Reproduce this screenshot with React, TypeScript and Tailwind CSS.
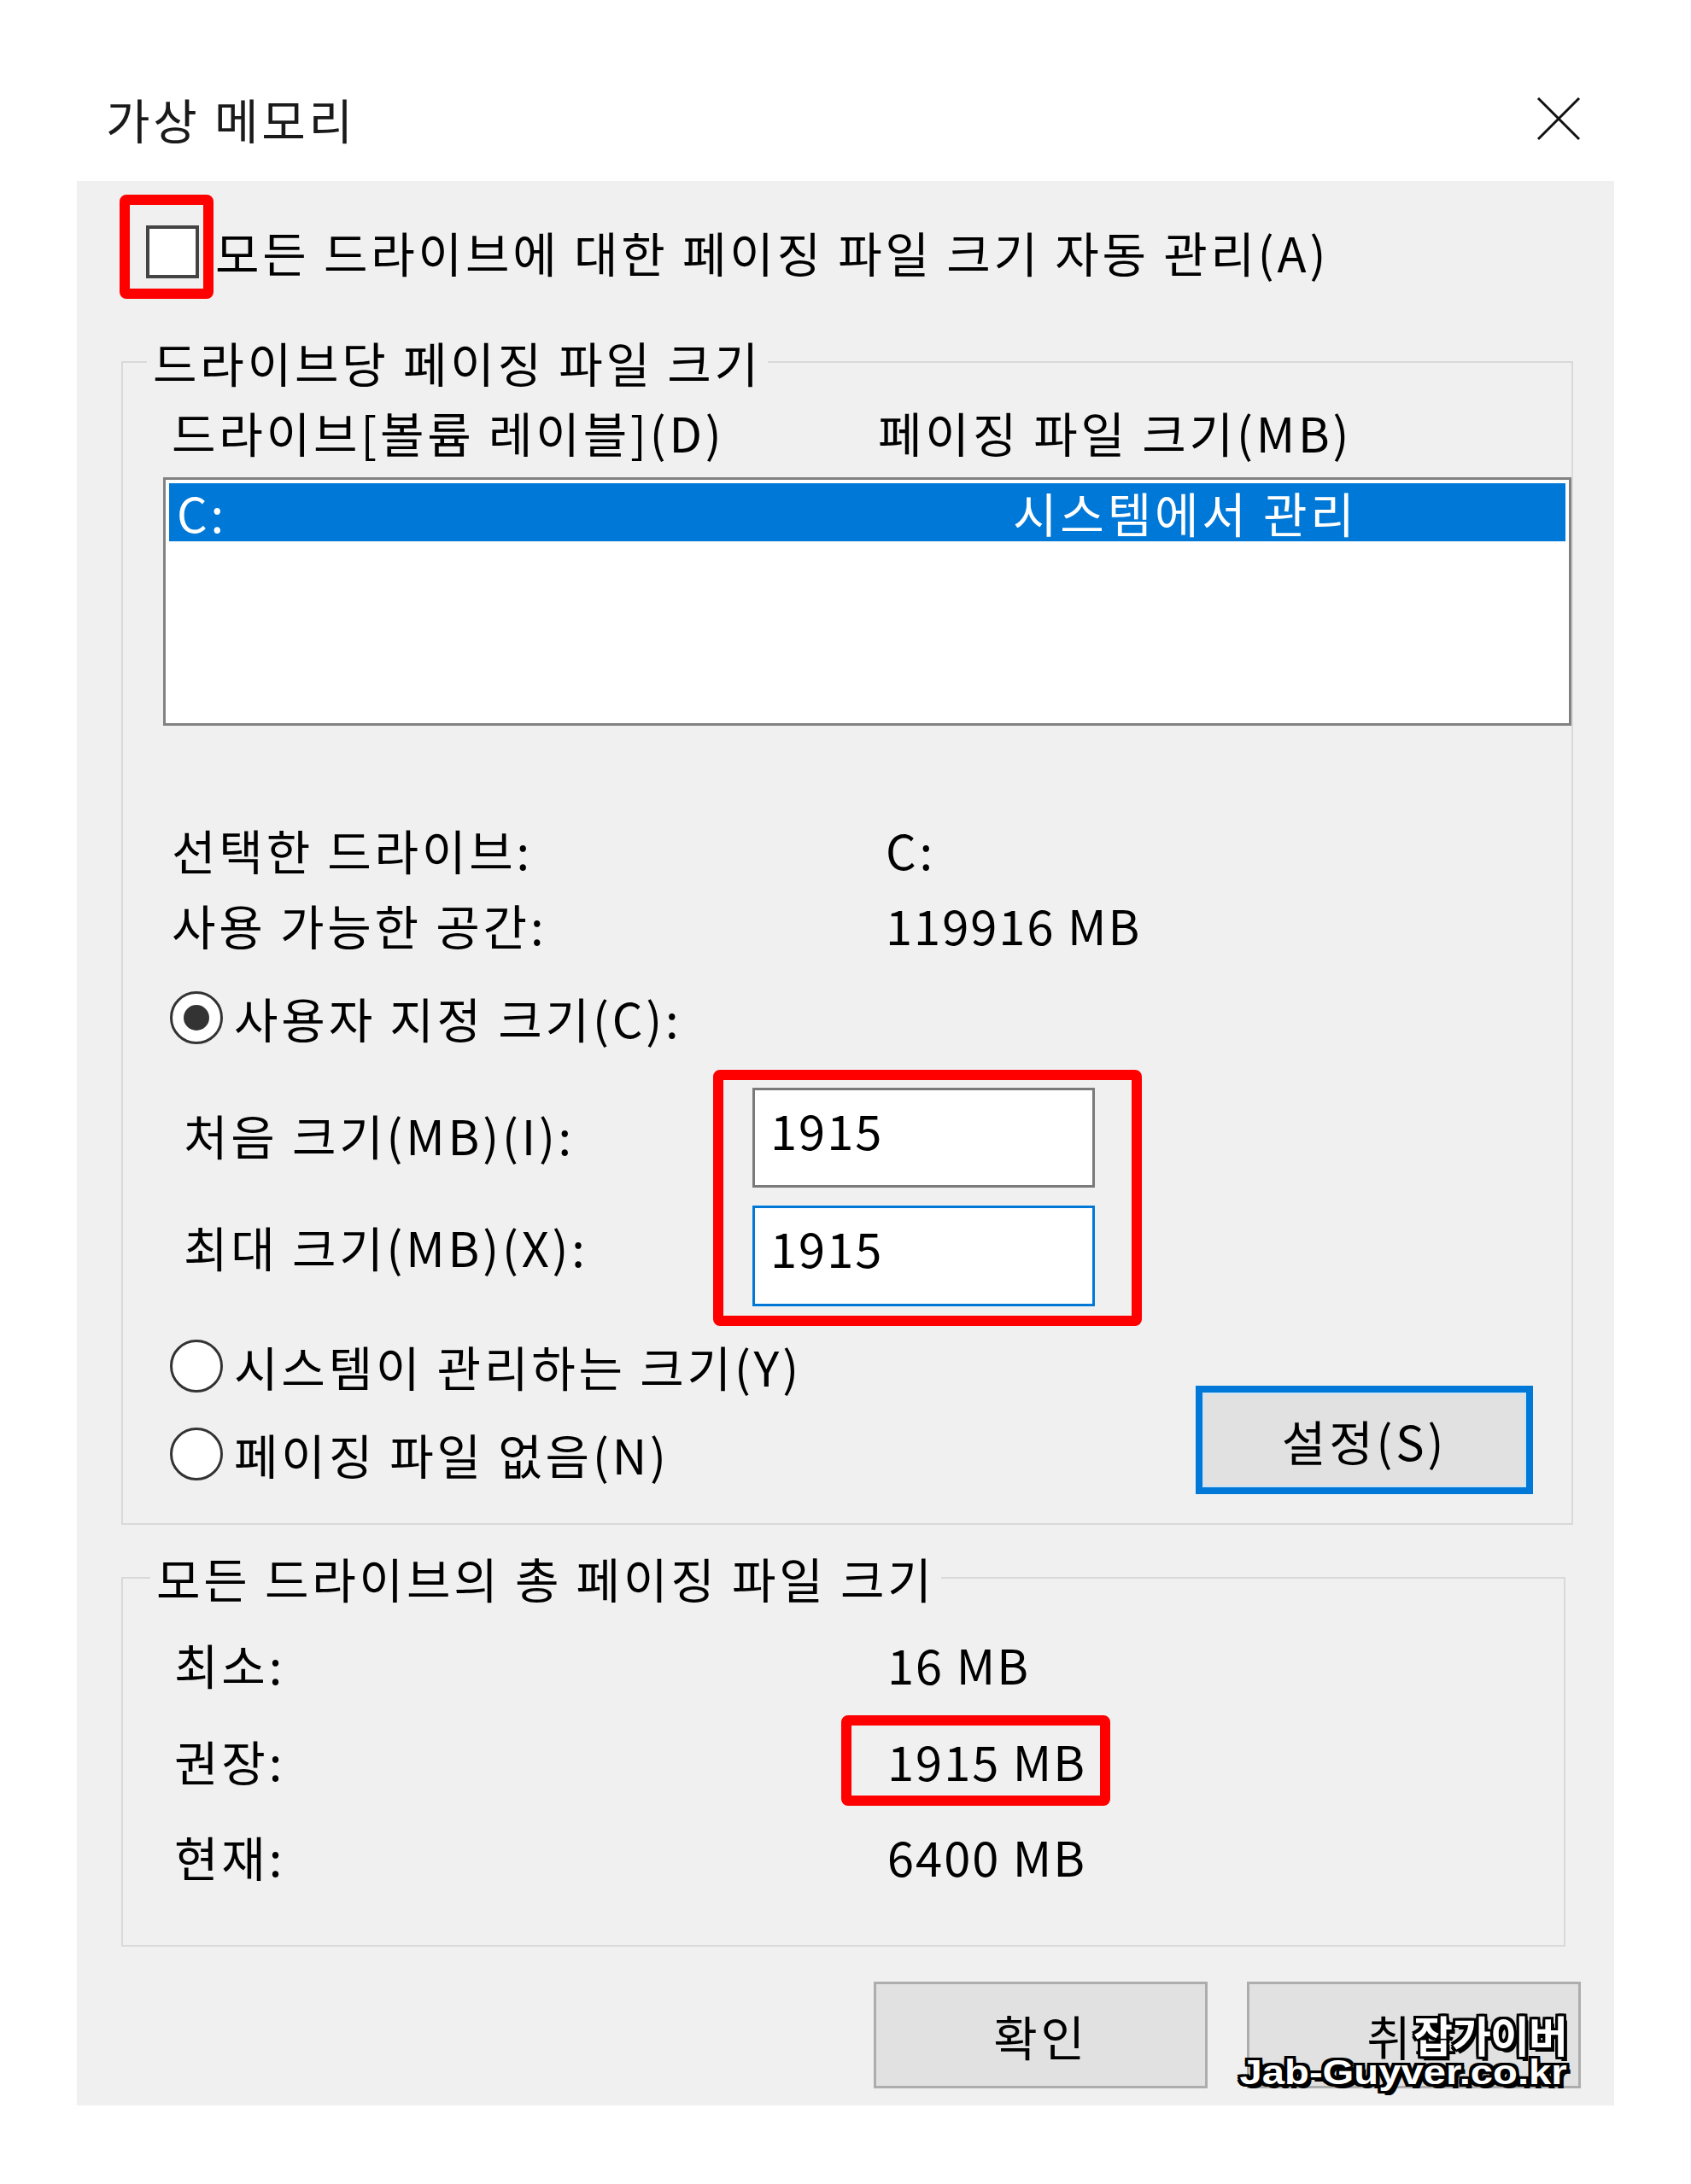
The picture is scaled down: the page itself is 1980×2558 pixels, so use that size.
import React from "react";

const Radio = ({ checked }: { checked?: boolean }) => (
  <span className="flex h-[62px] w-[62px] shrink-0 items-center justify-center rounded-full border-[3px] border-[#333] bg-white">
    {checked && <span className="h-[30px] w-[30px] rounded-full bg-[#333]" />}
  </span>
);

const Button = ({ children }: { children: React.ReactNode }) => (
  <div className="flex h-[125px] w-[391px] items-center justify-center border-[3px] border-[#adadad] bg-[#e1e1e1]">
    {children}
  </div>
);

const App = () => {
  return (
    <div className="flex h-[2558px] w-[1980px] flex-col bg-white font-['Noto_Sans_CJK_KR','Noto_Sans',sans-serif] text-[56px] leading-[62px] tracking-[3.8px] text-black">
      {/* title bar */}
      <div className="flex h-[212px] items-center justify-between pl-[124px] pr-[129px] pt-[66px]">
        <span className="text-[#1a1a1a]">가상 메모리</span>
        <svg width="52" height="52" viewBox="0 0 52 52">
          <path d="M2 2 L50 50 M50 2 L2 50" stroke="#111" strokeWidth="3" fill="none" />
        </svg>
      </div>

      {/* dialog body */}
      <div className="relative mx-[90px] h-[2254px] bg-[#f0f0f0]">
        <div className="flex items-center pl-[81px] pt-[52px]">
          <div className="relative h-[62px] w-[62px] shrink-0 border-[4px] border-[#444] bg-white">
            <div className="absolute -bottom-[28px] -left-[35px] -right-[21px] -top-[40px] rounded-[8px] border-[12px] border-[#ff0000]" />
          </div>
          <span className="ml-[19px]">모든 드라이브에 대한 페이징 파일 크기 자동 관리(A)</span>
        </div>

        {/* per drive */}
        <fieldset className="ml-[52px] mt-[67px] h-[1393px] w-[1691px] border-2 border-[#d9d9d9]">
          <legend className="ml-[28px] px-[7px] leading-[62px]">드라이브당 페이징 파일 크기</legend>

          <div className="mt-[20px] flex h-[62px] items-center pl-[57px]">
            <span className="w-[827px]">드라이브[볼륨 레이블](D)</span>
            <span>페이징 파일 크기(MB)</span>
          </div>

          <div className="ml-[47px] mt-[22px] h-[291px] w-[1649px] border-[3px] border-[#828282] bg-white p-[4px]">
            <div className="flex h-[68px] items-center bg-[#0078d7] pl-[9px] text-white">
              <span className="w-[979px]">C:</span>
              <span>시스템에서 관리</span>
            </div>
          </div>

          <div className="mt-[114px] flex h-[62px] items-center pl-[57px]">
            <span className="w-[836px]">선택한 드라이브:</span>
            <span>C:</span>
          </div>
          <div className="mt-[26px] flex h-[62px] items-center pl-[57px]">
            <span className="w-[836px]">사용 가능한 공간:</span>
            <span className="tracking-[2px]">119916 MB</span>
          </div>

          <div className="mt-[47px] flex items-center gap-[13px] pl-[55px]">
            <Radio checked />
            <span>사용자 지정 크기(C):</span>
          </div>

          <div className="mt-[30px] flex">
            <div className="flex w-[691px] flex-col pl-[71px]">
              <span className="mt-[45px]">처음 크기(MB)(I):</span>
              <span className="mt-[69px]">최대 크기(MB)(X):</span>
            </div>
            <div className="flex h-[300px] w-[502px] flex-col gap-[21px] rounded-[8px] border-[12px] border-[#ff0000] pl-[34px] pt-[9px]">
              <div className="h-[117px] w-[401px] border-[3px] border-[#7a7a7a] bg-white pl-[18px] pt-[15px] tracking-[2px]">1915</div>
              <div className="h-[118px] w-[401px] border-[3px] border-[#0078d7] bg-white pl-[18px] pt-[15px] tracking-[2px]">1915</div>
            </div>
          </div>

          <div className="mt-[16px] flex items-start">
            <div className="flex flex-col pl-[55px]">
              <div className="flex items-center gap-[13px]">
                <Radio />
                <span>시스템이 관리하는 크기(Y)</span>
              </div>
              <div className="mt-[41px] flex items-center gap-[13px]">
                <Radio />
                <span>페이징 파일 없음(N)</span>
              </div>
            </div>
            <div className="ml-auto mr-[45px] mt-[54px] flex h-[127px] w-[395px] items-center justify-center border-[8px] border-[#0078d7] bg-[#e1e1e1] shadow-[inset_0_0_0_2px_#cde4f7]">
              설정(S)
            </div>
          </div>
        </fieldset>

        {/* totals */}
        <fieldset className="ml-[52px] mt-[31px] h-[463px] w-[1691px] border-2 border-[#d9d9d9]">
          <legend className="ml-[32px] px-[7px] leading-[62px]">모든 드라이브의 총 페이징 파일 크기</legend>
          <div className="mt-[39px] flex h-[62px] items-center pl-[60px]">
            <span className="w-[835px]">최소:</span>
            <span className="tracking-[2px]">16 MB</span>
          </div>
          <div className="mt-[29px] flex items-center pl-[60px]">
            <span className="w-[781px]">권장:</span>
            <div className="flex h-[106px] w-[315px] items-center rounded-[8px] border-[12px] border-[#ff0000] pl-[42px] tracking-[2px]">
              1915 MB
            </div>
          </div>
          <div className="mt-[28px] flex h-[62px] items-center pl-[60px]">
            <span className="w-[835px]">현재:</span>
            <span className="tracking-[2px]">6400 MB</span>
          </div>
        </fieldset>

        <div className="mt-[41px] flex justify-end gap-[46px] pr-[39px]">
          <Button>확인</Button>
          <Button>취소</Button>
        </div>

        {/* watermark */}
        <div className="absolute bottom-[19px] right-[55px] flex flex-col items-end font-bold tracking-normal text-white [text-shadow:-3px_-3px_0_#000,3px_-3px_0_#000,-3px_3px_0_#000,3px_3px_0_#000,0_-3px_0_#000,0_3px_0_#000,-3px_0_0_#000,3px_0_0_#000,4px_5px_0_#000]">
          <span className="text-[50px] leading-[50px] tracking-[-1px]">잡가이버</span>
          <span className="origin-right scale-x-[1.18] font-['Liberation_Sans',sans-serif] text-[40px] leading-[40px]">Jab-Guyver.co.kr</span>
        </div>
      </div>
    </div>
  );
};

export default App;
